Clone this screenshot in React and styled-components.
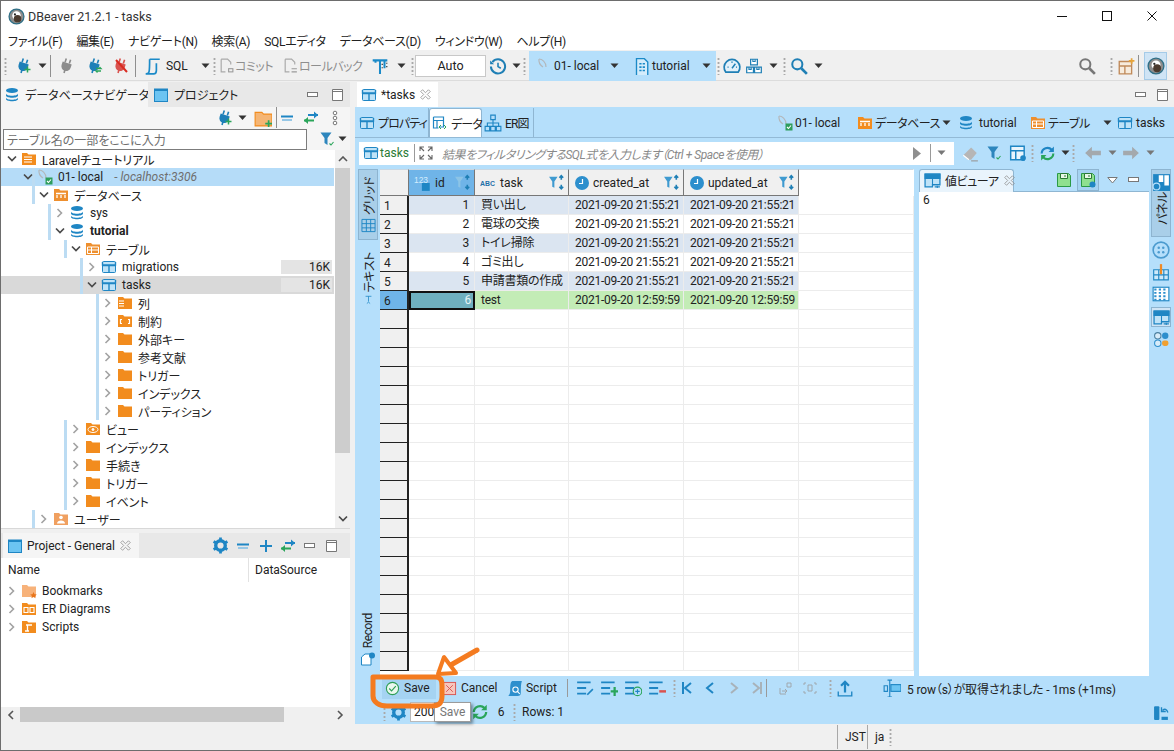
import React from "react";
import styled, { createGlobalStyle } from "styled-components";

const BLUE = "#b5dffb";
const ORANGE = "#f28c1e";
const ICON = "#1b8ac8";

const Global = createGlobalStyle`
  html, body { margin: 0; padding: 0; background: #f0f0f0; }
  body {
    font-family: Roboto, "Noto Sans CJK JP", sans-serif;
    font-size: 12px;
    color: #222;
    font-feature-settings: "palt";
  }
`;

const Window = styled.div`
  position: relative;
  box-sizing: border-box;
  width: 1174px;
  height: 751px;
  border: solid #6d6d6d;
  border-width: 1px 0 1px 1px;
  display: flex;
  flex-direction: column;
  overflow: hidden;
  background: #f0f0f0;
`;

const TitleBar = styled.div`
  height: 30px;
  flex: none;
  background: #fff;
  display: flex;
  align-items: center;
  padding-left: 7px;
  gap: 3px;
  font-size: 12.5px;
  color: #333;
`;
const WinButtons = styled.div`
  margin-left: auto;
  display: flex;
`;
const WinButton = styled.div`
  width: 45px;
  height: 30px;
  display: flex;
  align-items: center;
  justify-content: center;
`;
const MenuBar = styled.div`
  height: 19px;
  flex: none;
  background: #fff;
  display: flex;
  align-items: center;
  gap: 14px;
  padding-left: 7px;
  font-size: 12px;
  letter-spacing: -0.3px;
`;
const Toolbar = styled.div`
  height: 31px;
  flex: none;
  display: flex;
  align-items: center;
  background: #f0f0f0;
  border-bottom: 1px solid #dcdcdc;
  box-sizing: border-box;
  padding-top: 1px;
`;
const Slot = styled.div`
  flex: none;
  width: ${(p) => p.$w}px;
  display: flex;
  align-items: center;
  justify-content: ${(p) => (p.$left ? "flex-start" : "center")};
  white-space: nowrap;
  color: ${(p) => p.$color || "inherit"};
  height: 100%;
  ${(p) => p.$tight && "letter-spacing: -0.5px;"}
`;
const ToolSep = styled.div`
  flex: none;
  width: 1px;
  height: 22px;
  background: #8f8f8f;
`;
const Grip = styled.div`
  flex: none;
  width: ${(p) => p.$w || 5}px;
  height: 18px;
  background: radial-gradient(circle, #a9a9a9 1px, transparent 1.2px) center top / 3px 4px repeat-y;
`;
const AutoBox = styled.div`
  flex: none;
  box-sizing: border-box;
  width: 71px;
  height: 22px;
  background: #fff;
  border: 1px solid #c8c8c8;
  display: flex;
  align-items: center;
  justify-content: center;
  font-size: 12.5px;
`;
const BlueGroup = styled.div`
  flex: none;
  width: 187px;
  height: 30px;
  background: ${BLUE};
  display: flex;
  align-items: center;
`;
const Pressed = styled.div`
  flex: none;
  width: 23px;
  height: 28px;
  background: #cfe4f5;
  border: 1px solid #a5cbe8;
  box-sizing: border-box;
  display: flex;
  align-items: center;
  justify-content: center;
`;

const Main = styled.div`
  flex: 1;
  display: flex;
  min-height: 0;
  padding-top: 1px;
`;
const LeftColumn = styled.div`
  flex: none;
  width: 349px;
  display: flex;
  flex-direction: column;
`;
const TabRow = styled.div`
  height: 25px;
  flex: none;
  display: flex;
  align-items: center;
  background: ${(p) => p.$bg || "#e8e8e8"};
`;
const Tab = styled.div`
  flex: none;
  box-sizing: border-box;
  width: ${(p) => p.$w}px;
  height: 25px;
  display: flex;
  align-items: center;
  gap: ${(p) => p.$gap ?? 4}px;
  padding-left: ${(p) => p.$pad ?? 4}px;
  background: ${(p) => p.$bg || "#f5f5f5"};
  white-space: nowrap;
  font-size: 12px;
`;
const NavTools = styled.div`
  height: 21px;
  flex: none;
  display: flex;
  align-items: center;
  background: #f5f5f5;
`;
const FilterRow = styled.div`
  height: 22px;
  flex: none;
  display: flex;
  align-items: center;
  background: #f5f5f5;
  padding-left: 2px;
`;
const FilterBox = styled.div`
  box-sizing: border-box;
  width: 304px;
  height: 21px;
  border: 1px solid #7c7c7c;
  background: #fff;
  color: #6e6e6e;
  padding-left: 3px;
  display: flex;
  align-items: center;
`;
const TreeWrap = styled.div`
  height: 378px;
  flex: none;
  display: flex;
  background: #fff;
`;
const Tree = styled.div`
  width: 333px;
  flex: none;
  overflow: hidden;
`;
const TreeRow = styled.div`
  height: 18px;
  display: flex;
  align-items: center;
  padding-left: ${(p) => 4 + p.$d * 16}px;
  font-weight: ${(p) => (p.$bold ? 700 : 400)};
  background-color: ${(p) => p.$bg || "transparent"};
  background-image: ${(p) => (p.$guide ? "linear-gradient(#bcdcf3, #bcdcf3)" : "none")};
  background-size: 3px 100%;
  background-repeat: no-repeat;
  background-position: ${(p) => (p.$guide || 0) - 1}px 0;
  white-space: nowrap;
`;
const Chevron = styled.span`
  flex: none;
  width: 14px;
  display: flex;
  justify-content: center;
`;
const RowIcon = styled.span`
  flex: none;
  width: 20px;
  display: flex;
  justify-content: center;
  margin-right: 3px;
`;
const Host = styled.span`
  font-style: italic;
  color: #6f6f6f;
  margin-left: 11px;
`;
const SizeBar = styled.span`
  margin-left: auto;
  box-sizing: border-box;
  width: 51px;
  height: 14px;
  margin-right: 2px;
  background: #e4e4e4;
  text-align: right;
  padding-right: 2px;
  line-height: 14px;
`;
const VScroll = styled.div`
  flex: none;
  width: 15px;
  display: flex;
  flex-direction: column;
  background: #f0f0f0;
  margin-left: 1px;
`;
const ScrollEnd = styled.div`
  flex: none;
  height: 18px;
  display: flex;
  align-items: center;
  justify-content: center;
`;
const VThumb = styled.div`
  flex: none;
  height: 285px;
  background: #cdcdcd;
`;
const VFill = styled.div`
  flex: 1;
`;
const Splitter = styled.div`
  height: 5px;
  flex: none;
  background: #f0f0f0;
  border-top: 1px solid #d8d8d8;
  box-sizing: border-box;
`;
const ProjectBody = styled.div`
  height: 164px;
  flex: none;
  background: #fff;
  display: flex;
  flex-direction: column;
`;
const ProjectHead = styled.div`
  height: 24px;
  flex: none;
  display: flex;
  align-items: center;
  padding-left: 7px;
`;
const NameCol = styled.div`
  width: 240px;
  height: 100%;
  display: flex;
  align-items: center;
  border-right: 1px solid #e2e2e2;
  margin-right: 6px;
`;
const HScroll = styled.div`
  height: 15px;
  flex: none;
  display: flex;
  align-items: center;
  background: #f0f0f0;
`;
const HEnd = styled.div`
  flex: none;
  width: 19px;
  display: flex;
  justify-content: center;
`;
const HThumb = styled.div`
  width: 264px;
  height: 15px;
  background: #c9c9c9;
`;

const RightColumn = styled.div`
  flex: 1;
  margin-left: 5px;
  min-width: 0;
  display: flex;
  flex-direction: column;
`;
const BlueArea = styled.div`
  flex: 1;
  min-height: 0;
  background: ${BLUE};
  display: flex;
  flex-direction: column;
`;
const SubTabs = styled.div`
  height: 31px;
  flex: none;
  display: flex;
  align-items: flex-end;
  border-bottom: 1px solid #93bad6;
  box-sizing: border-box;
  padding-left: 2px;
`;
const SubTab = styled.div`
  flex: none;
  box-sizing: border-box;
  width: ${(p) => p.$w}px;
  height: 29px;
  display: flex;
  align-items: center;
  gap: 3px;
  padding-left: 2px;
  white-space: nowrap;
  letter-spacing: -0.9px;
  background: ${(p) => (p.$active ? "#fff" : "transparent")};
  border-right: 1px solid #8fb6d2;
  ${(p) => p.$active && "border-left: 1px solid #8fb6d2; border-top: 1px solid #8fb6d2; border-radius: 3px 3px 0 0;"}
`;
const Crumbs = styled.div`
  margin-left: auto;
  display: flex;
  align-items: center;
  height: 29px;
`;
const FilterBar = styled.div`
  height: 24px;
  margin-top: 3px;
  flex: none;
  display: flex;
  align-items: center;
  padding-left: 4px;
`;
const SqlInput = styled.div`
  flex: none;
  box-sizing: border-box;
  width: 595px;
  height: 23px;
  background: #fff;
  display: flex;
  align-items: center;
  padding-left: 3px;
`;
const Placeholder = styled.span`
  font-style: italic;
  color: #8a8a8a;
  white-space: nowrap;
  width: 470px;
  letter-spacing: -0.45px;
`;
const TaskName = styled.span`
  color: #2b7a35;
`;
const VSep = styled.span`
  flex: none;
  width: 1px;
  height: 18px;
  background: #9a9a9a;
`;
const Content = styled.div`
  flex: none;
  height: 507px;
  margin-top: 4px;
  display: flex;
  align-items: stretch;
`;
const SideTabs = styled.div`
  flex: none;
  width: 24px;
  padding-left: 3px;
  box-sizing: border-box;
  display: flex;
  flex-direction: column;
  align-items: flex-start;
`;
const SideTab = styled.div`
  box-sizing: border-box;
  width: 20px;
  height: ${(p) => p.$h}px;
  display: flex;
  flex-direction: column;
  align-items: center;
  gap: 3px;
  padding-top: ${(p) => p.$pad ?? 7}px;
  margin-top: ${(p) => p.$mt || 0}px;
  ${(p) => p.$bottom && "margin-top: auto; margin-bottom: 11px;"}
  background: ${(p) => (p.$active ? "#a9cfe9" : "transparent")};
  border: 1px solid ${(p) => (p.$active ? "#8db4d0" : "transparent")};
`;
const VText = styled.span`
  writing-mode: vertical-rl;
  text-orientation: sideways;
  transform: rotate(180deg);
  white-space: nowrap;
  letter-spacing: -0.4px;
`;
const Grid = styled.div`
  flex: none;
  width: 534px;
  height: 507px;
  margin-left: 1px;
  background: #fff;
  overflow: hidden;
  display: grid;
  grid-template-columns: 29px 66px 94px 115px 115px 115px;
  grid-auto-rows: 19px;
  grid-template-rows: 27px;
`;
const HeadCell = styled.div`
  box-sizing: border-box;
  display: flex;
  align-items: center;
  gap: 3px;
  padding: 0 3px 0 5px;
  background: ${(p) => (p.$sel ? "#6fb4e8" : "#f0f0f0")};
  border-right: 1px solid ${(p) => (p.$noline ? "transparent" : "#777")};
  border-bottom: 1px solid #777;
  border-top: 1px solid #c9d7e2;
  white-space: nowrap;
  ${(p) => p.$noline && "border-bottom-color: transparent; background: #fff;"}
`;
const HeadName = styled.span`
  flex: 1;
`;
const NumCell = styled.div`
  box-sizing: border-box;
  padding-left: 4px;
  line-height: 20px;
  background: ${(p) => (p.$sel ? "#6fb4e8" : "#f0f0f0")};
  border-right: 2px solid #222;
  border-bottom: 1px solid #222;
`;
const Cell = styled.div`
  box-sizing: border-box;
  padding: 0 5px 0 6px;
  line-height: 19px;
  letter-spacing: -0.25px;
  white-space: nowrap;
  overflow: hidden;
  background: ${(p) => p.$bg || "#fff"};
  border-right: 1px solid #ececec;
  border-bottom: 1px solid #ececec;
  text-align: ${(p) => (p.$right ? "right" : "left")};
`;
const CurrentCell = styled(Cell)`
  background: #6fb0bf;
  color: #e8f4f6;
  border: 2px solid #111;
  line-height: 15px;
  padding-right: 2px;
`;
const ValuePanel = styled.div`
  flex: none;
  width: 230px;
  margin-left: 5px;
  display: flex;
  flex-direction: column;
`;
const ValueHead = styled.div`
  height: 23px;
  flex: none;
  display: flex;
  align-items: center;
  border-bottom: 1px solid #8fb6d2;
  box-sizing: border-box;
`;
const ValueTab = styled.div`
  flex: none;
  box-sizing: border-box;
  width: 95px;
  height: 23px;
  display: flex;
  align-items: center;
  gap: 4px;
  padding-left: 4px;
  background: #e9f4fc;
  border: 1px solid #8fb6d2;
  border-bottom: 0;
  border-radius: 3px 3px 0 0;
  white-space: nowrap;
  letter-spacing: -0.4px;
`;
const DiskPressed = styled.div`
  flex: none;
  width: 22px;
  height: 22px;
  margin: 0 1px;
  background: #a5d3f2;
  border: 1px solid #8db4d0;
  box-sizing: border-box;
  display: flex;
  align-items: center;
  justify-content: center;
`;
const ValueBody = styled.div`
  flex: 1;
  background: #fff;
  padding: 1px 4px;
  line-height: 15px;
`;
const Rail = styled.div`
  flex: none;
  width: 24px;
  display: flex;
  flex-direction: column;
  align-items: center;
  gap: 4px;
`;
const RailTab = styled.div`
  box-sizing: border-box;
  width: 20px;
  height: 68px;
  background: #a9cfe9;
  border: 1px solid #8db4d0;
  display: flex;
  flex-direction: column;
  align-items: center;
  gap: 1px;
  padding-top: 3px;
`;
const RailPressed = styled.div`
  width: 18px;
  height: 18px;
  background: #cfe4f5;
  border: 1px solid #8db4d0;
  display: flex;
  align-items: center;
  justify-content: center;
`;
const BottomRow = styled.div`
  height: 24px;
  flex: none;
  display: flex;
  align-items: center;
  white-space: nowrap;
`;
const SaveButton = styled.div`
  flex: none;
  width: 54px;
  height: 22px;
  display: flex;
  align-items: center;
  gap: 4px;
  padding-left: 3px;
  box-sizing: border-box;
  background: #a5d3f2;
`;
const RowsInput = styled.div`
  flex: none;
  width: 60px;
  height: 20px;
  background: #fff;
  box-sizing: border-box;
  border: 1px solid #b9b9b9;
  padding-left: 3px;
  line-height: 18px;
`;
const Message = styled.span`
  letter-spacing: -0.15px;
`;
const StatusBar = styled.div`
  height: 26px;
  flex: none;
  display: flex;
  align-items: center;
  justify-content: flex-start;
  padding-left: 836px;
  background: #f0f0f0;
`;
const StatusCell = styled.div`
  height: 24px;
  width: ${(p) => p.$w}px;
  box-sizing: border-box;
  border-left: 1px solid #a8a8a8;
  display: flex;
  align-items: center;
  padding-left: 7px;
`;
const Tooltip = styled.div`
  position: absolute;
  left: 433px;
  top: 701px;
  width: 37px;
  height: 20px;
  box-sizing: border-box;
  background: #fff;
  border: 1px solid #9b9b9b;
  box-shadow: 2px 2px 3px rgba(0, 0, 0, 0.4);
  color: #777;
  text-align: center;
  line-height: 18px;
`;
const Annotation = styled.svg`
  position: absolute;
  left: 360px;
  top: 640px;
  pointer-events: none;
`;

/* ---- icons ---- */
const S = ({ s = 16, children, ...rest }) => (
  <svg width={s} height={s} viewBox="0 0 16 16" fill="none" style={{ flex: "none" }} {...rest}>
    {children}
  </svg>
);
const Arrow = ({ c = "#333" }) => (
  <svg width="9" height="6" viewBox="0 0 9 6" style={{ flex: "none" }}>
    <path d="M0.5 0.5h8L4.5 5z" fill={c} />
  </svg>
);
const Open = () => (
  <svg width="10" height="8" viewBox="0 0 10 8"><path d="M1 1.5l4 4 4-4" stroke="#4a4a4a" strokeWidth="1.7" fill="none" /></svg>
);
const Closed = () => (
  <svg width="8" height="10" viewBox="0 0 8 10"><path d="M1.5 1l4 4-4 4" stroke="#a2a2a2" strokeWidth="1.6" fill="none" /></svg>
);
const Plug = ({ c = "#1d7fb8", badge }) => (
  <S>
    <g transform="rotate(18 8 8)">
      <path d="M5 1v4M9.5 1v4" stroke={c} strokeWidth="1.6" />
      <path d="M2.5 5h9.5v3.5a4.7 4.7 0 0 1-9.5 0zM6.5 12h1.6v3.5H6.5z" fill={c} />
    </g>
    {badge === "plus" && <path d="M11.5 8.5v6M8.5 11.5h6" stroke="#2aa55a" strokeWidth="1.5" />}
    {badge === "swap" && <path d="M9 10.5h5l-1.5-1.5M14 13h-5l1.5 1.5" stroke="#2aa55a" strokeWidth="1.3" />}
    {badge === "x" && <path d="M3 2l11 12" stroke="#d92b20" strokeWidth="2" />}
  </S>
);
const SqlDoc = () => (
  <S s={18}>
    <path d="M5 2h9M5 2c0 4 0 9-.5 11-.3 1.5-1.5 2-3 2h7c1.5 0 2.5-1 2.5-3V5.5" stroke={ICON} strokeWidth="1.5" />
  </S>
);
const GreyDoc = ({ mark }) => (
  <S s={17}>
    <path d="M3 2h6l3 3v2M3 2v12h4" stroke="#a9a9a9" strokeWidth="1.1" />
    {mark === "box" && <rect x="10" y="11" width="4" height="3" stroke="#999" />}
    {mark === "swap" && <path d="M9 11h5M9 14h5" stroke="#999" />}
  </S>
);
const TFormat = () => (
  <S s={18}>
    <path d="M1.5 3h13M4 3v2M12 3v7M8 3v12" stroke={ICON} strokeWidth="1.8" />
    <path d="M10 6v1M10 9v1M14 5v1M14 8v1" stroke="#444" strokeWidth="1.2" />
  </S>
);
const History = () => (
  <S s={18}>
    <path d="M3 4.5a6.3 6.3 0 1 1-1.3 4" stroke="#1f7fb5" strokeWidth="1.8" />
    <path d="M1 3v3.5h3.5z" fill="#1f7fb5" />
    <path d="M8 5v3.5l2.5 1.5" stroke="#1f7fb5" strokeWidth="1.4" />
  </S>
);
const Leaf = ({ check }) => (
  <S>
    <path d="M2 1c3 0 7 3 7 8" stroke="#b3b8bc" strokeWidth="1.2" />
    <path d="M2 1c-.5 3 1 6 4 8" stroke="#b3b8bc" strokeWidth="1.2" />
    {check && <rect x="8.5" y="8.5" width="7" height="7" fill="#2e9d5b" />}
    {check && <path d="M10 12l1.5 1.5 2.5-3" stroke="#fff" strokeWidth="1.1" />}
  </S>
);
const SheetDb = () => (
  <S s={18}>
    <path d="M4 1.5h7l3 3v12H4z" stroke={ICON} strokeWidth="1.2" fill="#d4ecfb" />
    <path d="M6.5 6h5M6.5 9h5M6.5 12h5" stroke={ICON} strokeWidth="1.5" strokeDasharray="2 1" />
  </S>
);
const Gauge = () => (
  <S s={18}>
    <path d="M2.5 13.5a7 7 0 1 1 11 0z" stroke="#1f7fb5" strokeWidth="1.5" fill="#e3f1fa" />
    <path d="M8 10l3-4M4 9h1M11.5 9h1M8 4v1" stroke="#1f7fb5" strokeWidth="1.3" />
  </S>
);
const Boxes = () => (
  <S s={18}>
    <path d="M5 2h6v5H5zM1.5 9h6v5h-6zM8.5 9h6v5h-6z" stroke="#1f7fb5" strokeWidth="1.1" fill="#fff" />
    <path d="M7 2v2h2V2M3.5 9v2h2V9M10.5 9v2h2V9" stroke="#1f7fb5" />
  </S>
);
const Search = ({ c = "#1f7fb5" }) => (
  <S s={18}>
    <circle cx="6.5" cy="6.5" r="4.5" stroke={c} strokeWidth="1.8" />
    <path d="M10 10l5 5" stroke={c} strokeWidth="2.4" />
  </S>
);
const NewPersp = () => (
  <S s={18}>
    <path d="M2 4h11v11H2zM2 8h11M7 8v7" stroke="#c08a5a" strokeWidth="1.2" fill="#f7ecdd" />
    <path d="M13 1v5M10.5 3.5h5" stroke="#e7a53a" strokeWidth="1.5" />
  </S>
);
const Beaver = ({ s = 16 }) => (
  <S s={s}>
    <circle cx="8" cy="8" r="7" fill="#8d8d8d" stroke="#2f6f86" strokeWidth="1.2" />
    <circle cx="8" cy="7" r="4" fill="#fff" />
    <circle cx="9" cy="10" r="3.5" fill="#4b3a2e" />
    <circle cx="6.5" cy="6" r="1" fill="#222" />
  </S>
);
const Stack = ({ c = "#1f86c4" }) => (
  <S>
    <ellipse cx="8" cy="3.5" rx="6" ry="2.5" fill={c} />
    <path d="M2 6.5c0 3 12 3 12 0v2c0 3-12 3-12 0zM2 10.5c0 3 12 3 12 0v1.5c0 3-12 3-12 0z" fill={c} />
  </S>
);
const TableIc = () => (
  <S>
    <rect x="1.5" y="2.5" width="13" height="11" rx="1" fill="#bfe3f8" stroke="#1f86c4" />
    <path d="M1.5 6.5h13M8 6.5v7M1.5 3v3h13V3" stroke="#1f86c4" strokeWidth="1.4" />
  </S>
);
const PanelIc = () => (
  <S>
    <rect x="1.5" y="2" width="13" height="12.5" fill="#6cc4f2" stroke="#1f86c4" />
    <path d="M1.5 3h13" stroke="#1f86c4" strokeWidth="2" />
  </S>
);
const TabClose = () => (
  <svg width="13" height="13" viewBox="0 0 11 11" style={{ flex: "none" }}>
    <path d="M1.5 3L3 1.5l2.5 2.5L8 1.5 9.5 3 7 5.5 9.5 8 8 9.5 5.5 7 3 9.5 1.5 8 4 5.5z" stroke="#8f8f8f" fill="none" strokeWidth="0.7" />
  </svg>
);
const Minimize = () => (
  <svg width="11" height="6" viewBox="0 0 11 6" style={{ flex: "none" }}><rect x="0.5" y="0.5" width="10" height="4" fill="#fff" stroke="#777" /></svg>
);
const Maximize = () => (
  <svg width="11" height="12" viewBox="0 0 11 12" style={{ flex: "none" }}><path d="M.5.5h10v11H.5zM.5 2.5h10" fill="#fff" stroke="#777" /></svg>
);
const Folder = ({ c = ORANGE, children }) => (
  <S>
    <path d="M1 2h5l1.5 1.5H15V14H1z" fill={c} />
    {children}
  </S>
);
const marks = {
  doc: <path d="M3 6h8M3 8.5h8M3 11h8" stroke="#fff" strokeWidth="1.2" />,
  db: <path d="M3 6.5h10M4 8v3M8 8v3M12 8v3" stroke="#fff" strokeWidth="1.3" />,
  table: <path d="M2.5 6h11v6.5h-11zM2.5 9h11M6.5 6v6.5" stroke="#fff" strokeWidth="1" />,
  col: <path d="M2 6h5M2 8.5h5M2 11h5" stroke="#fff" strokeWidth="1.2" />,
  brk: <path d="M5 6.5H3.5v4H5M11 6.5h1.5v4H11" stroke="#fff" strokeWidth="1.2" />,
  eye: <g stroke="#fff" strokeWidth="1"><ellipse cx="8" cy="8.5" rx="5" ry="3" /><circle cx="8" cy="8.5" r="1" fill="#fff" /></g>,
  user: <g fill="#fff"><circle cx="8" cy="6.5" r="1.8" /><path d="M4 12.5c0-4 8-4 8 0z" /></g>,
  er: <path d="M3 6.5h4v5H3zM9 6.5h4v5H9z" stroke="#fff" strokeWidth="1.1" />,
  script: <path d="M5 6h6M6.5 6v6M4 12h4" stroke="#fff" strokeWidth="1.3" />,
  star: <path d="M12.5 9l1 2.3 2.3.2-1.800 1.500.6 2.300-2.100-1.300-2.100 1.300.6-2.300-1.800-1.500 2.300-.2z" fill="#e8741a" />,
};
const F = ({ m, c }) => <Folder c={c}>{marks[m]}</Folder>;
const FilterIc = ({ c = "#2d86bd", s = 16, check }) => (
  <S s={s}>
    <path d="M1.5 1.5h11L8.5 7v7l-3-2V7z" fill={c} />
    {check && <path d="M10.5 12.5l1.5 1.5 2.5-3" stroke="#2aa55a" strokeWidth="1.1" />}
  </S>
);
const SortFilter = ({ dim }) => (
  <S s={17}>
    <path d="M1 2.5h8L6 7v6L4 12V7z" fill={dim ? "#8cc4e6" : "#3f9ad0"} />
    <path d="M12.5 1.5v4M10.700 3.5l1.800-2 1.800 2M12.500 10v4M10.700 12l1.800 2 1.800-2" stroke="#1f7fb5" strokeWidth="1.5" />
  </S>
);
const Clock = () => (
  <S>
    <circle cx="8" cy="8" r="7" fill="#2d8fcd" />
    <path d="M8.5 4v4.5H5" stroke="#fff" strokeWidth="1.2" />
  </S>
);
const FolderNew = () => (
  <S s={18}>
    <path d="M1 3h6l1.5 1.5H16V15H1z" fill="#f5b574" stroke={ORANGE} />
    <path d="M13 10v6M10 13h6" stroke="#2aa55a" strokeWidth="1.5" />
  </S>
);
const MinusBar = () => (
  <S><path d="M2 6.5h12" stroke="#1f86c4" strokeWidth="2" /><path d="M3 10h10" stroke="#96c7e6" strokeWidth="2" /></S>
);
const SwapLR = () => (
  <S>
    <path d="M1 10.5h10" stroke="#2aa55a" strokeWidth="2" /><path d="M5 7v7L1 10.5z" fill="#2aa55a" />
    <path d="M5 5h10" stroke="#1f86c4" strokeWidth="2" /><path d="M11 1.5v7L15 5z" fill="#1f86c4" />
  </S>
);
const Dots = () => (
  <S>
    <g stroke="#777" fill="#fff"><circle cx="8" cy="3" r="1.8" /><circle cx="8" cy="8" r="1.8" /><circle cx="8" cy="13" r="1.8" /></g>
  </S>
);
const Gear = ({ s = 17 }) => (
  <S s={s}>
    <circle cx="8" cy="8" r="4.5" fill="none" stroke="#1f86c4" strokeWidth="3.2" />
    <path d="M8 .5v3M8 12.5v3M1.5 4.2l2.600 1.500M11.900 10.300l2.600 1.500M1.500 11.800l2.600-1.500M11.900 5.700l2.600-1.500" stroke="#1f86c4" strokeWidth="2.6" />
  </S>
);
const PlusCross = () => (
  <S><path d="M8 2v12M2 8h12" stroke="#1f86c4" strokeWidth="2" /></S>
);
const Expand = () => (
  <S>
    <path d="M2 6V2h4M14 6V2h-4M2 10v4h4M14 10v4h-4M2 2l4 4M14 2l-4 4M2 14l4-4M14 14l-4-4" stroke="#666" strokeWidth="1.1" />
  </S>
);
const TabData = () => (
  <S>
    <path d="M1.5 2h10v10H7M1.5 2v11h5M1.5 5.5h10M5 5.5V13" stroke="#1f86c4" strokeWidth="1.2" />
    <path d="M9 10l-2 2 2 2M12 10l2 2-2 2" stroke="#2aa55a" strokeWidth="1" />
  </S>
);
const Er = () => (
  <S s={18}>
    <path d="M6 1h4v4H6zM1 11h4v4H1zM6 11h4v4H6zM11 11h4v4h-4zM8 5v6M3 11V8h10v3" stroke="#1f86c4" strokeWidth="1" />
  </S>
);
const Eraser = () => (
  <S s={18}><path d="M2 10l7-7 5 5-5 6H6z" fill="#b6b6b6" /><path d="M2 10l5 4" stroke="#fff" /><path d="M9 15h6" stroke="#999" /></S>
);
const TableGear = () => (
  <S s={18}>
    <path d="M1.5 2h12v12h-12zM1.5 6h12M6 6v8" stroke="#1f86c4" strokeWidth="1.3" fill="#e9f5fd" />
    <circle cx="12.5" cy="12.5" r="2.5" fill="#1f86c4" />
  </S>
);
const Refresh = ({ c1 = "#1f86c4", c2 = "#2aa55a", s = 18 }) => (
  <S s={s}>
    <path d="M2.5 8a5.5 5.5 0 0 1 9.500-3.500" stroke={c1} strokeWidth="2" /><path d="M14 1.5v5h-5z" fill={c1} />
    <path d="M13.5 8A5.5 5.5 0 0 1 4 11.5" stroke={c2} strokeWidth="2" /><path d="M2 14.5v-5h5z" fill={c2} />
  </S>
);
const BigArrow = ({ dir }) => (
  <S s={18} style={{ flex: "none", transform: dir === "left" ? "scaleX(-1)" : "none" }}>
    <path d="M1 6h8V2.5L15 8l-6 5.500V10H1z" fill="#a4a9ad" />
  </S>
);
const Disk = ({ gear }) => (
  <S>
    <path d="M1.5 1.5h11l2 2v11h-13z" fill="#8fe08f" stroke="#2b9a46" />
    <path d="M4.5 1.5h7v5h-7zM9 3v2" stroke="#2b7a35" fill="#e8f7e8" />
    {gear && <circle cx="12.5" cy="12.5" r="3" fill="#1f86c4" />}
  </S>
);
const TriOutline = () => (
  <svg width="11" height="7" viewBox="0 0 11 7"><path d="M.8.5h9.400L5.500 6z" fill="#fff" stroke="#777" /></svg>
);
const ViewerIc = () => (
  <S s={17}>
    <path d="M1 2h14v10H8v2H1z" fill="#bfe3f8" stroke="#1f86c4" strokeWidth="1.2" />
    <path d="M1 2h14v4H1zM8 6v6" fill="#1f86c4" stroke="#1f86c4" />
    <path d="M10 14h5M12.5 13v2" stroke="#1f86c4" />
  </S>
);
const GridIc = () => (
  <S s={15}><path d="M1 1.5h14v13H1zM1 6h14M1 10.500h14M5.700 1.500v13M10.300 1.500v13" stroke="#1f86c4" strokeWidth="1" /></S>
);
const TextIc = () => (
  <svg width="15" height="15" viewBox="0 0 15 15"><path d="M3 2h9M7.500 2v8M5 13l2.500-2 2.500 2" stroke="#1f86c4" strokeWidth="1.2" fill="none" /></svg>
);
const RecordIc = () => (
  <S>
    <path d="M1.500 6L5 3h6v11H1.500z" fill="#fff" stroke="#1f86c4" />
    <circle cx="12" cy="4.500" r="3" fill="#1f86c4" />
  </S>
);
const Check = () => (
  <S s={15}>
    <circle cx="8" cy="8" r="6.500" fill="#eaf8ee" stroke="#2f9e57" strokeWidth="1.2" />
    <path d="M4.500 8l2.500 2.500 4.500-5" stroke="#2f9e57" strokeWidth="1.2" />
  </S>
);
const CancelIc = () => (
  <S s={15}>
    <rect x="1.500" y="1.500" width="13" height="13" fill="#f6c6bd" stroke="#d9534f" />
    <path d="M4.500 4.500l7 7M11.500 4.500l-7 7" stroke="#d9534f" />
  </S>
);
const ScriptIc = () => (
  <S s={17}>
    <path d="M5 1h9c-1 3-1 7-1 11 0 2-1 3-3 3H1c1.500-1 2-3 2-5 0-4 0-8 2-9z" fill="#2d8fcd" />
    <circle cx="8" cy="9" r="2.500" stroke="#fff" /><path d="M10 11l2 2" stroke="#fff" />
  </S>
);
const RowOp = ({ kind }) => (
  <S s={18}>
    <path d="M1 3h12M1 8h8M1 13h8" stroke="#1f86c4" strokeWidth="1.6" />
    {kind === "edit" && <path d="M10 14l5-5" stroke="#1f86c4" strokeWidth="1.5" />}
    {kind === "add" && <path d="M13 7v8M9.500 11h7" stroke="#2aa55a" strokeWidth="2" />}
    {kind === "copy" && <g><circle cx="12" cy="11" r="3.800" stroke="#2aa55a" /><path d="M12 9v4M10 11h4" stroke="#1f86c4" /></g>}
    {kind === "del" && <path d="M10 11h7" stroke="#d9534f" strokeWidth="2.2" />}
  </S>
);
const Nav = ({ kind, dim }) => {
  const c = dim ? "#a8b2b9" : "#1f86c4";
  const d = { first: "M11 3L5 8l6 5", prev: "M11 3L5 8l6 5", next: "M5 3l6 5-6 5", last: "M5 3l6 5-6 5" }[kind];
  return (
    <S>
      <path d={d} stroke={c} strokeWidth="2" />
      {kind === "first" && <path d="M3 2v12" stroke={c} strokeWidth="2" />}
      {kind === "last" && <path d="M13 2v12" stroke={c} strokeWidth="2" />}
    </S>
  );
};
const GreyExp = ({ v }) => (
  <S>
    {v ? <path d="M2 3h2M2 3v2M14 3v2M14 3h-2M2 13h2M2 13v-2M14 13h-2M14 13v-2M6 5h4v6H6z" stroke="#a0a8ae" />
      : <path d="M2 8v6h6M9 3h4v4H9zM4 11h5M7 9l2 2-2 2" stroke="#a0a8ae" />}
  </S>
);
const Upload = () => (
  <S s={18}><path d="M8 12V3M4.500 6L8 2.500 11.500 6" stroke="#1f86c4" strokeWidth="2" /><path d="M2 11v4h12v-4" stroke="#1f86c4" strokeWidth="1.2" /></S>
);
const PinMsg = () => (
  <S s={18}><path d="M6 1v15M4 1h4M4 16h4" stroke="#1f86c4" /><path d="M1 6h3v5H1z" stroke="#1f86c4" /><rect x="7" y="5" width="9" height="6" fill="#6cc4f2" stroke="#1f86c4" /></S>
);
const RestoreIc = () => (
  <S s={17}>
    <rect x="1" y="2" width="5" height="13" rx="1" fill="#1f86c4" />
    <path d="M8 12h6v3H8z" fill="#1f86c4" />
    <path d="M9 6c2-2 4-1 5 2M8 3v4h4" stroke="#1f86c4" strokeWidth="1.3" />
  </S>
);
const Panels = () => (
  <S s={18}>
    <rect x="1" y="1" width="15" height="15" fill="#1f86c4" />
    <path d="M6 2h4v6H6zM11 2h4v9h-4z" fill="#fff" />
    <circle cx="4" cy="12" r="3" fill="#1f86c4" stroke="#b5dffb" />
  </S>
);
const Circle4 = () => (
  <S s={18}><circle cx="8" cy="8" r="7" stroke="#4b9bcf" strokeWidth="1.4" /><g fill="#4b9bcf"><circle cx="6" cy="6" r="1.1" /><circle cx="10" cy="6" r="1.1" /><circle cx="6" cy="10" r="1.1" /><circle cx="10" cy="10" r="1.1" /></g></S>
);
const PivotIc = () => (
  <S s={18}>
    <path d="M1.500 6h13v9h-13zM1.500 10.500h13M6 6v9M10.500 6v9" stroke="#1f86c4" fill="#cfe9fa" />
    <path d="M8 1v9" stroke="#f08a24" strokeWidth="2" />
  </S>
);
const Checker = () => (
  <S s={18}>
    <rect x="1" y="2" width="14" height="12" fill="#fff" stroke="#1f86c4" />
    <path d="M2 4h12M2 7h12M2 10h12M2 13h12" stroke="#2d8fcd" strokeWidth="1.6" strokeDasharray="2 2" />
  </S>
);
const Opts = () => (
  <S s={17}>
    <circle cx="4.500" cy="4.500" r="3" stroke="#4a7f9f" fill="#d7ebf8" /><circle cx="11.500" cy="4.500" r="3" fill="#2d8fcd" />
    <circle cx="4.500" cy="11.500" r="3" stroke="#2d8fcd" fill="#d7ebf8" /><rect x="8.500" y="9" width="6" height="5" rx="2" fill="#f0a030" />
  </S>
);

/* ---- data ---- */
const treeRows = [
  { d: 0, t: "Laravelチュートリアル", icon: <F m="doc" />, open: 1 },
  { d: 1, t: "01- local", icon: <Leaf check />, open: 1, host: "- localhost:3306", bg: "#b5dcf8", g: 32 },
  { d: 2, t: "データベース", icon: <F m="db" c="#ee8f2e" />, open: 1, g: 32 },
  { d: 3, t: "sys", icon: <Stack />, g: 48 },
  { d: 3, t: "tutorial", icon: <Stack />, open: 1, bold: 1, g: 48 },
  { d: 4, t: "テーブル", icon: <F m="table" c="#ee8f2e" />, open: 1, g: 64 },
  { d: 5, t: "migrations", icon: <TableIc />, size: "16K", g: 80 },
  { d: 5, t: "tasks", icon: <TableIc />, size: "16K", open: 1, bg: "#d9d9d9", g: 80 },
  { d: 6, t: "列", icon: <F m="col" />, g: 96 },
  { d: 6, t: "制約", icon: <F m="brk" />, g: 96 },
  { d: 6, t: "外部キー", icon: <F />, g: 96 },
  { d: 6, t: "参考文献", icon: <F />, g: 96 },
  { d: 6, t: "トリガー", icon: <F />, g: 96 },
  { d: 6, t: "インデックス", icon: <F />, g: 96 },
  { d: 6, t: "パーティション", icon: <F />, g: 96 },
  { d: 4, t: "ビュー", icon: <F m="eye" />, g: 64 },
  { d: 4, t: "インデックス", icon: <F />, g: 64 },
  { d: 4, t: "手続き", icon: <F />, g: 64 },
  { d: 4, t: "トリガー", icon: <F />, g: 64 },
  { d: 4, t: "イベント", icon: <F />, g: 64 },
  { d: 2, t: "ユーザー", icon: <F m="user" c="#f0a060" />, g: 32 },
];
const gridRows = [
  ["買い出し", "2021-09-20 21:55:21"],
  ["電球の交換", "2021-09-20 21:55:21"],
  ["トイレ掃除", "2021-09-20 21:55:21"],
  ["ゴミ出し", "2021-09-20 21:55:21"],
  ["申請書類の作成", "2021-09-20 21:55:21"],
  ["test", "2021-09-20 12:59:59"],
];
const menus = ["ファイル(F)", "編集(E)", "ナビゲート(N)", "検索(A)", "SQLエディタ", "データベース(D)", "ウィンドウ(W)", "ヘルプ(H)"];

const DataGrid = () => {
  const cells = [];
  for (let i = 0; i < 25; i++) {
    const row = gridRows[i];
    const last = i === 5;
    const bg = last ? "#c3ecb6" : row && i % 2 === 0 ? "#dbe5f1" : "#fff";
    cells.push(<NumCell key={`n${i}`} $sel={last}>{row ? i + 1 : ""}</NumCell>);
    cells.push(
      last ? (
        <CurrentCell key={`i${i}`} $right>6</CurrentCell>
      ) : (
        <Cell key={`i${i}`} $bg={bg} $right>{row ? i + 1 : ""}</Cell>
      )
    );
    cells.push(<Cell key={`t${i}`} $bg={bg}>{row ? row[0] : ""}</Cell>);
    cells.push(<Cell key={`c${i}`} $bg={bg}>{row ? row[1] : ""}</Cell>);
    cells.push(<Cell key={`u${i}`} $bg={bg}>{row ? row[1] : ""}</Cell>);
    cells.push(<Cell key={`e${i}`} />);
  }
  return (
    <Grid>
      <HeadCell />
      <HeadCell $sel>
        <S s={18}>
          <text x="0" y="8" fontSize="7.5" fill="#d4ecfc" fontFamily="Liberation Sans">123</text>
          <rect x="7" y="8" width="7" height="7" fill="#1f86c4" />
        </S>
        <HeadName>id</HeadName>
        <SortFilter dim />
      </HeadCell>
      <HeadCell>
        <S s={17}><text x="0" y="11" fontSize="6.5" fontWeight="700" fill="#1f6fa8" fontFamily="Liberation Sans">ABC</text></S>
        <HeadName>task</HeadName>
        <SortFilter />
      </HeadCell>
      <HeadCell><Clock /><HeadName>created_at</HeadName><SortFilter /></HeadCell>
      <HeadCell><Clock /><HeadName>updated_at</HeadName><SortFilter /></HeadCell>
      <HeadCell $noline />
      {cells}
    </Grid>
  );
};

const App = () => (
  <Window>
    <Global />
    <TitleBar>
      <Beaver s={17} />
      <span>DBeaver 21.2.1 - tasks</span>
      <WinButtons>
        <WinButton><svg width="10" height="10"><path d="M0 5.5h10" stroke="#111" /></svg></WinButton>
        <WinButton><svg width="10" height="10"><rect x=".5" y=".5" width="9" height="9" fill="none" stroke="#111" /></svg></WinButton>
        <WinButton><svg width="10" height="10"><path d="M.5.5l9 9M9.5.5l-9 9" stroke="#111" /></svg></WinButton>
      </WinButtons>
    </TitleBar>
    <MenuBar>{menus.map((m) => <span key={m}>{m}</span>)}</MenuBar>
    <Toolbar>
      <Slot $w={3} /><Grip $w={3} /><Slot $w={7} />
      <Slot $w={20}><Plug badge="plus" /></Slot>
      <Slot $w={16}><Arrow /></Slot>
      <ToolSep />
      <Slot $w={32}><Plug c="#8c8c8c" /></Slot>
      <Slot $w={24}><Plug badge="swap" /></Slot>
      <Slot $w={28}><Plug c="#d9534f" badge="x" /></Slot>
      <ToolSep />
      <Slot $w={7} />
      <Slot $w={20}><SqlDoc /></Slot>
      <Slot $w={35} $left>&nbsp;SQL</Slot>
      <Slot $w={14}><Arrow /></Slot>
      <Grip $w={5} />
      <Slot $w={18}><GreyDoc mark="box" /></Slot>
      <Slot $w={46} $left $tight $color="#8e8e8e">コミット</Slot>
      <Slot $w={18}><GreyDoc mark="swap" /></Slot>
      <Slot $w={69} $left $tight $color="#8e8e8e">ロールバック</Slot>
      <Slot $w={24}><TFormat /></Slot>
      <Slot $w={18}><Arrow /></Slot>
      <Grip $w={5} />
      <AutoBox>Auto</AutoBox>
      <Slot $w={24}><History /></Slot>
      <Slot $w={12}><Arrow /></Slot>
      <Grip $w={5} />
      <Slot $w={2} />
      <BlueGroup>
        <Slot $w={7} />
        <Slot $w={18}><Leaf /></Slot>
        <Slot $w={53} $left>01- local</Slot>
        <Slot $w={14}><Arrow /></Slot>
        <Slot $w={12} />
        <Slot $w={16}><SheetDb /></Slot>
        <Slot $w={48} $left>&nbsp;tutorial</Slot>
        <Slot $w={18}><Arrow /></Slot>
      </BlueGroup>
      <Grip $w={5} />
      <Slot $w={22}><Gauge /></Slot>
      <Slot $w={22}><Boxes /></Slot>
      <Slot $w={17}><Arrow /></Slot>
      <Grip $w={5} />
      <Slot $w={24}><Search /></Slot>
      <Slot $w={14}><Arrow /></Slot>
      <Slot $w={251} />
      <Slot $w={22}><Search c="#777" /></Slot>
      <Slot $w={11} /><Grip $w={5} />
      <Slot $w={24}><NewPersp /></Slot>
      <ToolSep />
      <Slot $w={5} />
      <Pressed><Beaver s={18} /></Pressed>
    </Toolbar>
    <Main>
      <LeftColumn>
        <TabRow>
          <Tab $w={147} $pad={3} $gap={5}><Stack /><span>データベースナビゲータ</span><TabClose /></Tab>
          <Tab $w={152} $bg="#e8e8e8" $pad={5} $gap={5}><PanelIc /><span>プロジェクト</span></Tab>
          <Slot $w={25}><Minimize /></Slot>
          <Slot $w={25}><Maximize /></Slot>
        </TabRow>
        <NavTools>
          <Slot $w={214} />
          <Slot $w={20}><Plug badge="plus" /></Slot>
          <Slot $w={15}><Arrow /></Slot>
          <Slot $w={26}><FolderNew /></Slot>
          <ToolSep />
          <Slot $w={20}><MinusBar /></Slot>
          <Slot $w={28}><SwapLR /></Slot>
          <Slot $w={20}><Dots /></Slot>
        </NavTools>
        <FilterRow>
          <FilterBox>テーブル名の一部をここに入力</FilterBox>
          <Slot $w={10} />
          <Slot $w={20}><FilterIc check /></Slot>
          <Slot $w={10}><Arrow /></Slot>
        </FilterRow>
        <TreeWrap>
          <Tree>
            {treeRows.map((r, i) => (
              <TreeRow key={i} $d={r.d} $bg={r.bg} $bold={r.bold} $guide={r.g}>
                <Chevron>{r.open ? <Open /> : <Closed />}</Chevron>
                <RowIcon>{r.icon}</RowIcon>
                <span>{r.t}</span>
                {r.host && <Host>{r.host}</Host>}
                {r.size && <SizeBar>{r.size}</SizeBar>}
              </TreeRow>
            ))}
          </Tree>
          <VScroll>
            <ScrollEnd><svg width="10" height="6"><path d="M1 5l4-4 4 4" stroke="#555" strokeWidth="1.6" fill="none" /></svg></ScrollEnd>
            <VThumb />
            <VFill />
            <ScrollEnd><Open /></ScrollEnd>
          </VScroll>
        </TreeWrap>
        <Splitter />
        <TabRow>
          <Slot $w={2} />
          <Tab $w={136} $pad={4}><PanelIc /><span>Project - General</span><TabClose /></Tab>
          <Slot $w={72} />
          <Slot $w={19}><Gear /></Slot>
          <Slot $w={25}><MinusBar /></Slot>
          <Slot $w={22}><PlusCross /></Slot>
          <Slot $w={22}><SwapLR /></Slot>
          <Slot $w={21}><Minimize /></Slot>
          <Slot $w={22}><Maximize /></Slot>
        </TabRow>
        <ProjectBody>
          <ProjectHead><NameCol>Name</NameCol><span>DataSource</span></ProjectHead>
          <TreeRow $d={0}><Chevron><Closed /></Chevron><RowIcon><F m="star" c="#f7b27a" /></RowIcon><span>Bookmarks</span></TreeRow>
          <TreeRow $d={0}><Chevron><Closed /></Chevron><RowIcon><F m="er" /></RowIcon><span>ER Diagrams</span></TreeRow>
          <TreeRow $d={0}><Chevron><Closed /></Chevron><RowIcon><F m="script" /></RowIcon><span>Scripts</span></TreeRow>
          <VFill />
          <HScroll>
            <HEnd><svg width="7" height="10"><path d="M6 1L2 5l4 4" stroke="#555" strokeWidth="1.6" fill="none" /></svg></HEnd>
            <HThumb />
            <VFill />
            <HEnd><svg width="7" height="10"><path d="M1 1l4 4-4 4" stroke="#555" strokeWidth="1.6" fill="none" /></svg></HEnd>
          </HScroll>
        </ProjectBody>
      </LeftColumn>
      <RightColumn>
        <TabRow $bg="#f0f0f0">
          <Slot $w={2} />
          <Tab $w={81} $bg="#fff" $pad={4}><TableIc /><span>*tasks</span><TabClose /></Tab>
          <Slot $w={692} />
          <Slot $w={21}><Minimize /></Slot>
          <Slot $w={22}><Maximize /></Slot>
        </TabRow>
        <BlueArea>
          <SubTabs>
            <SubTab $w={72}><TableIc /><span>プロパティ</span></SubTab>
            <SubTab $w={53} $active><TabData /><span>データ</span></SubTab>
            <SubTab $w={52}><Er /><span>ER図</span></SubTab>
            <Crumbs>
              <Slot $w={20}><Leaf check /></Slot>
              <Slot $w={60} $left>01- local</Slot>
              <Slot $w={20}><F m="db" /></Slot>
              <Slot $w={64} $left $tight>データベース</Slot>
              <Slot $w={14}><Arrow /></Slot>
              <Slot $w={3} />
              <Slot $w={20}><Stack /></Slot>
              <Slot $w={52} $left>&nbsp;tutorial</Slot>
              <Slot $w={20}><F m="table" c="#ee8f2e" /></Slot>
              <Slot $w={52} $left $tight>テーブル</Slot>
              <Slot $w={14}><Arrow /></Slot>
              <Slot $w={22}><TableIc /></Slot>
              <Slot $w={38} $left>tasks</Slot>
            </Crumbs>
          </SubTabs>
          <FilterBar>
            <SqlInput>
              <Slot $w={18}><TableIc /></Slot>
              <Slot $w={34} $left><TaskName>tasks</TaskName></Slot>
              <VSep />
              <Slot $w={22}><Expand /></Slot>
              <Slot $w={5} />
              <Placeholder>結果をフィルタリングするSQL式を入力します（Ctrl + Spaceを使用）</Placeholder>
              <svg width="10" height="13"><path d="M1 0l8 6.5-8 6.5z" fill="#8f8f8f" /></svg>
              <Slot $w={8} />
              <VSep />
              <Slot $w={20}><Arrow c="#777" /></Slot>
            </SqlInput>
            <Slot $w={4} />
            <Slot $w={24}><Eraser /></Slot>
            <Slot $w={24}><FilterIc check /></Slot>
            <Slot $w={24}><TableGear /></Slot>
            <Grip $w={5} />
            <Slot $w={24}><Refresh s={17} /></Slot>
            <Slot $w={12}><Arrow /></Slot>
            <Grip $w={5} />
            <Slot $w={6} />
            <Slot $w={22}><BigArrow dir="left" /></Slot>
            <Slot $w={16}><Arrow c="#777" /></Slot>
            <Slot $w={22}><BigArrow /></Slot>
            <Slot $w={16}><Arrow c="#777" /></Slot>
          </FilterBar>
          <Content>
            <SideTabs>
              <SideTab $h={71} $active><VText>グリッド</VText><GridIc /></SideTab>
              <SideTab $h={62} $mt={4}><VText>テキスト</VText><TextIc /></SideTab>
              <SideTab $h={60} $bottom><VText>Record</VText><RecordIc /></SideTab>
            </SideTabs>
            <DataGrid />
            <ValuePanel>
              <ValueHead>
                <ValueTab><ViewerIc /><span>値ビューア</span><TabClose /></ValueTab>
                <Slot $w={38} />
                <Slot $w={24}><Disk /></Slot>
                <DiskPressed><Disk gear /></DiskPressed>
                <Slot $w={25}><TriOutline /></Slot>
                <Slot $w={16}><Minimize /></Slot>
              </ValueHead>
              <ValueBody>6</ValueBody>
            </ValuePanel>
            <Rail>
              <RailTab><Panels /><VText>パネル</VText></RailTab>
              <Circle4 />
              <PivotIc />
              <Checker />
              <RailPressed><ViewerIc /></RailPressed>
              <Opts />
            </Rail>
          </Content>
          <BottomRow>
            <Slot $w={27} />
            <SaveButton><Check /><span>Save</span></SaveButton>
            <Slot $w={4} />
            <Slot $w={18}><CancelIc /></Slot>
            <Slot $w={49} $left>&nbsp;Cancel</Slot>
            <Slot $w={16}><ScriptIc /></Slot>
            <Slot $w={44} $left>&nbsp;Script</Slot>
            <VSep />
            <Slot $w={5} />
            <Slot $w={24}><RowOp kind="edit" /></Slot>
            <Slot $w={24}><RowOp kind="add" /></Slot>
            <Slot $w={24}><RowOp kind="copy" /></Slot>
            <Slot $w={24}><RowOp kind="del" /></Slot>
            <Slot $w={3} />
            <Grip $w={5} />
            <Slot $w={21}><Nav kind="first" /></Slot>
            <Slot $w={24}><Nav kind="prev" /></Slot>
            <Slot $w={24}><Nav kind="next" dim /></Slot>
            <Slot $w={20}><Nav kind="last" dim /></Slot>
            <VSep />
            <Slot $w={7} />
            <Slot $w={24}><GreyExp /></Slot>
            <Slot $w={24}><GreyExp v /></Slot>
            <Slot $w={6} />
            <Grip $w={5} />
            <Slot $w={24}><Upload /></Slot>
            <Slot $w={23} />
            <Slot $w={24}><PinMsg /></Slot>
            <Slot $w={3} />
            <Message>5 row（s）が取得されました - 1ms (+1ms)</Message>
          </BottomRow>
          <BottomRow>
            <Slot $w={27} />
            <Grip $w={5} />
            <Slot $w={23}><Gear /></Slot>
            <RowsInput>200</RowsInput>
            <Slot $w={20}><Refresh c1="#2aa55a" /></Slot>
            <Slot $w={22}>6</Slot>
            <Grip $w={5} />
            <Slot $w={5} />
            <span>Rows: 1</span>
            <VFill />
            <Slot $w={26}><RestoreIc /></Slot>
          </BottomRow>
        </BlueArea>
      </RightColumn>
    </Main>
    <StatusBar>
      <StatusCell $w={30}>JST</StatusCell>
      <StatusCell $w={22}>ja</StatusCell>
      <Grip $w={3} />
    </StatusBar>
    <Tooltip>Save</Tooltip>
    <Annotation width="130" height="75" viewBox="0 0 130 75">
      <path d="M12 36h62c6 0 7 3 7 9v10c0 8-4 10-10 10H26c-8 0-14-4-14-10V36z" fill="none" stroke="#f47b20" strokeWidth="5" strokeLinejoin="round" />
      <path d="M116 9L88 25" stroke="#f47b20" strokeWidth="5" strokeLinecap="round" />
      <path d="M83 16L77 33l18-1z" fill="#fff" stroke="#f47b20" strokeWidth="4" strokeLinejoin="round" />
    </Annotation>
  </Window>
);

export default App;
